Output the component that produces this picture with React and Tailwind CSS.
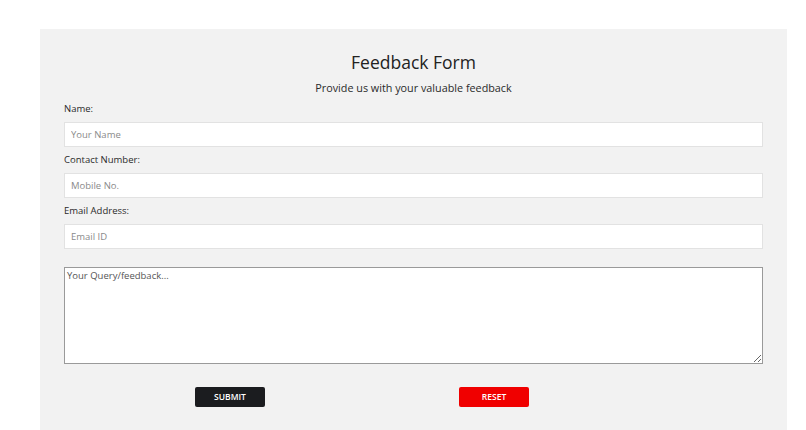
const Field = ({ label, placeholder, type = 'text' }) => (
  <>
    <label className="mt-[6px] block h-[14px] text-[9.5px] leading-[14px] text-[#2a2a2a]">{label}</label>
    <input
      type={type}
      placeholder={placeholder}
      className="mt-[6px] block h-[25px] w-full border border-[#e2e2e2] bg-white px-[6px] text-[9.5px] text-[#333] outline-none placeholder:text-[#8a8a8a]"
    />
  </>
);

const App = () => {
  return (
    <div className="min-h-[430px] bg-white pt-[29px] pl-[40px] pr-[19px] font-['Open_Sans',sans-serif]">
      <form className="bg-[#f2f2f2] px-[24px] pt-[19px] pb-[24px]">
        <h1 className="text-center text-[17.5px] leading-[28px] text-[#222]">Feedback Form</h1>
        <p className="mt-[3px] text-center text-[10.8px] leading-[18px] text-[#2a2a2a]">Provide us with your valuable feedback</p>

        <div className="mt-[-1px]">
          <Field label="Name:" placeholder="Your Name" />
          <Field label="Contact Number:" placeholder="Mobile No." type="tel" />
          <Field label="Email Address:" placeholder="Email ID" type="email" />
        </div>

        <textarea
          placeholder="Your Query/feedback..."
          className="mt-[18px] block h-[97px] w-full border border-[#9a9a9a] bg-white px-[2px] py-[1px] text-[9.5px] text-[#333] outline-none placeholder:text-[#555]"
        />

        <div className="mt-[23px] flex pl-[131px]">
          <button type="submit" className="h-[20px] w-[70px] rounded-[2px] bg-[#1b1c1f] text-[8.5px] font-semibold text-white">
            SUBMIT
          </button>
          <button type="reset" className="ml-[194px] h-[20px] w-[70px] rounded-[2px] bg-[#f00000] text-[8.5px] font-semibold text-white">
            RESET
          </button>
        </div>
      </form>
    </div>
  );
};

export default App;
